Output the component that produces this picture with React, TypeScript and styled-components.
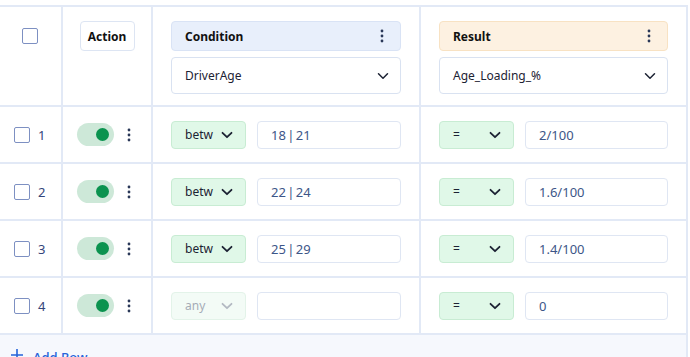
import React from 'react';
import styled, { createGlobalStyle, css } from 'styled-components';

const GlobalStyle = createGlobalStyle`
  * { box-sizing: border-box; }
  body {
    margin: 0;
    background: #fff;
    font-family: "Noto Sans", "Liberation Sans", sans-serif;
    color: #1c2233;
  }
`;

const line = '#e2e9f6';

const Wrapper = styled.div`
  margin-top: 5px;
  width: 688px;
  border-top: 2px solid ${line};
  border-right: 2px solid ${line};
`;

const Grid = styled.div`
  display: grid;
  grid-template-columns: 63px 90px 268px 265px;
`;

const Cell = styled.div<{ $head?: boolean; $last?: boolean }>`
  display: flex;
  border-bottom: 2px solid ${line};
  border-right: ${(p) => (p.$last ? 'none' : `2px solid ${line}`)};
  height: ${(p) => (p.$head ? '100px' : '57px')};
  ${(p) =>
    p.$head
      ? css`
          align-items: flex-start;
          padding: 14px 18px 0;
        `
      : css`
          align-items: center;
          padding: 0 18px;
        `}
`;

const CheckCell = styled(Cell)`
  padding: 0 0 0 14px;
  gap: 8px;
  ${(p) =>
    p.$head &&
    css`
      justify-content: center;
      padding: 21px 2px 0 0;
    `}
`;

const ActionCell = styled(Cell)`
  padding-left: 14px;
  gap: 13px;
  ${(p) =>
    p.$head &&
    css`
      justify-content: center;
      padding: 14px 0 0;
    `}
`;

const Checkbox = styled.span`
  width: 16px;
  height: 16px;
  border: 1.5px solid #7d90c2;
  border-radius: 2px;
  background: #fff;
  flex: none;
`;

const RowNum = styled.span`
  font-size: 13px;
  color: #34457a;
`;

const ActionButton = styled.div`
  width: 55px;
  height: 30px;
  border: 1px solid #dde5f3;
  border-radius: 4px;
  display: flex;
  align-items: center;
  justify-content: center;
  font-size: 12px;
  font-weight: 700;
  color: #111;
`;

const Stack = styled.div`
  display: flex;
  flex-direction: column;
  gap: 6px;
  width: 100%;
`;

const HeadBox = styled.div<{ $tone: 'blue' | 'orange' }>`
  height: 30px;
  border-radius: 4px;
  display: flex;
  align-items: center;
  justify-content: space-between;
  padding: 0 16px 0 13px;
  font-size: 12px;
  font-weight: 700;
  color: #111;
  background: ${(p) => (p.$tone === 'blue' ? '#e8effb' : '#fdf1e1')};
  border: 1px solid ${(p) => (p.$tone === 'blue' ? '#d9e3f5' : '#f8e2c3')};
`;

const FieldSelect = styled.div`
  height: 37px;
  border: 1px solid #d9e2f1;
  border-radius: 4px;
  display: flex;
  align-items: center;
  justify-content: space-between;
  padding: 0 11px 0 13px;
  font-size: 12px;
  color: #1c2233;
`;

const Toggle = styled.div`
  width: 37px;
  height: 23px;
  border-radius: 12px;
  background: #cde8d8;
  display: flex;
  align-items: center;
  justify-content: flex-end;
  padding-right: 5px;
  flex: none;
`;

const Knob = styled.span`
  width: 13px;
  height: 13px;
  border-radius: 50%;
  background: #0b934f;
`;

const Pair = styled.div`
  display: flex;
  gap: 11px;
  width: 100%;
`;

const OpSelect = styled.div<{ $disabled?: boolean }>`
  width: 75px;
  height: 28px;
  flex: none;
  border-radius: 4px;
  display: flex;
  align-items: center;
  justify-content: space-between;
  padding: 0 12px 0 13px;
  font-size: 12px;
  background: ${(p) => (p.$disabled ? '#f3fbf6' : '#e0f8e8')};
  border: 1px solid ${(p) => (p.$disabled ? '#e3f3e9' : '#c8ecd3')};
  color: ${(p) => (p.$disabled ? '#a6acb6' : '#1c2233')};
`;

const ValueInput = styled.div`
  flex: 1;
  height: 28px;
  border: 1px solid #dfe6f3;
  border-radius: 4px;
  display: flex;
  align-items: center;
  padding: 0 13px;
  font-size: 13px;
  word-spacing: -2px;
  color: #3d5688;
`;

const Footer = styled.div`
  background: #f6f8fd;
  height: 40px;
  display: flex;
  align-items: flex-start;
  gap: 9px;
  padding: 13px 0 0 10px;
  color: #2563d9;
  font-size: 13px;
  font-weight: 500;
`;

const Kebab = ({ color = '#2a3858' }: { color?: string }) => (
  <svg width="4" height="14" viewBox="0 0 4 14">
    <circle cx="2" cy="2" r="1.4" fill={color} />
    <circle cx="2" cy="7" r="1.4" fill={color} />
    <circle cx="2" cy="12" r="1.4" fill={color} />
  </svg>
);

const Chevron = ({ color = '#1c2233', w = 1.5 }: { color?: string; w?: number }) => (
  <svg width="12" height="8" viewBox="0 0 12 8">
    <path d="M1.5 1.8 6 6.2 10.5 1.8" fill="none" stroke={color} strokeWidth={w} strokeLinecap="round" strokeLinejoin="round" />
  </svg>
);

const Plus = () => (
  <svg width="14" height="14" viewBox="0 0 14 14">
    <path d="M7 1v12M1 7h12" stroke="#2563d9" strokeWidth="1.6" />
  </svg>
);

const rows = [
  { op: 'betw', value: '18 | 21', result: '2/100' },
  { op: 'betw', value: '22 | 24', result: '1.6/100' },
  { op: 'betw', value: '25 | 29', result: '1.4/100' },
  { op: 'any', value: '', result: '0', disabled: true },
];

const App = () => {
  return (
    <>
      <GlobalStyle />
      <Wrapper>
        <Grid>
          <CheckCell $head>
            <Checkbox />
          </CheckCell>
          <ActionCell $head>
            <ActionButton>Action</ActionButton>
          </ActionCell>
          <Cell $head>
            <Stack>
              <HeadBox $tone="blue">
                Condition
                <Kebab />
              </HeadBox>
              <FieldSelect>
                DriverAge
                <Chevron />
              </FieldSelect>
            </Stack>
          </Cell>
          <Cell $head $last>
            <Stack>
              <HeadBox $tone="orange">
                Result
                <Kebab />
              </HeadBox>
              <FieldSelect>
                Age_Loading_%
                <Chevron />
              </FieldSelect>
            </Stack>
          </Cell>

          {rows.map((r, i) => (
            <React.Fragment key={i}>
              <CheckCell>
                <Checkbox />
                <RowNum>{i + 1}</RowNum>
              </CheckCell>
              <ActionCell>
                <Toggle>
                  <Knob />
                </Toggle>
                <Kebab />
              </ActionCell>
              <Cell>
                <Pair>
                  <OpSelect $disabled={r.disabled}>
                    {r.op}
                    <Chevron color={r.disabled ? '#b3b9c2' : '#1c2233'} w={1.8} />
                  </OpSelect>
                  <ValueInput>{r.value}</ValueInput>
                </Pair>
              </Cell>
              <Cell $last>
                <Pair>
                  <OpSelect>
                    =
                    <Chevron w={1.8} />
                  </OpSelect>
                  <ValueInput>{r.result}</ValueInput>
                </Pair>
              </Cell>
            </React.Fragment>
          ))}
        </Grid>
        <Footer>
          <Plus />
          Add Row
        </Footer>
      </Wrapper>
    </>
  );
};

export default App;
